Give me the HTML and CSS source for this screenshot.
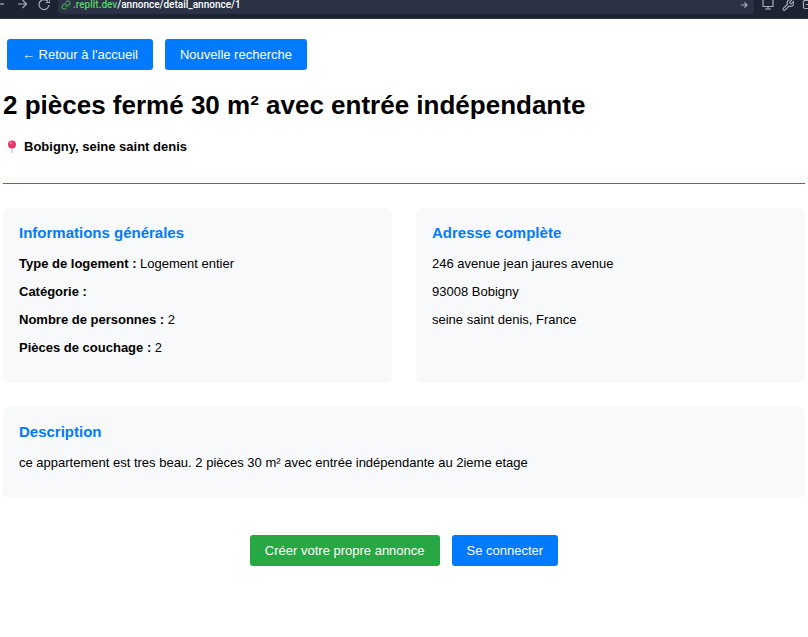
FILE: index.html
```html
<!DOCTYPE html>
<html lang="fr">
<head>
<meta charset="utf-8">
<title>Annonce</title>
<link rel="stylesheet" href="styles.css">
</head>
<body>
<header class="toolbar">
  <button class="tool" type="button" aria-label="Page précédente"><svg width="8" height="12" viewBox="0 0 8 12"><path d="M0 4h4"/></svg></button>
  <button class="tool" type="button" aria-label="Page suivante"><svg width="12" height="12" viewBox="0 0 12 12"><path d="M2 4h8.500M6.500 0l4 4-4 4"/></svg></button>
  <button class="tool" type="button" aria-label="Actualiser"><svg width="14" height="12" viewBox="0 0 14 12"><path d="M12 1.500A5 5 0 1 0 13 5M10 2.500H14V-1"/></svg></button>
  <div class="address">
    <svg class="link-icon" width="10" height="10" viewBox="0 0 24 24"><path d="M10 13a5 5 0 0 0 7.500.5l3-3a5 5 0 0 0-7-7l-1.700 1.700M14 11a5 5 0 0 0-7.500-.5l-3 3a5 5 0 0 0 7 7l1.700-1.700"/></svg>
    <span class="url"><span class="host">.replit.dev</span>/annonce/detail_annonce/1</span>
    <svg class="go" width="8" height="8" viewBox="0 0 8 8"><path d="M1 4h6M4.500 1.500L7 4 4.500 6.500"/></svg>
  </div>
  <button class="tool" type="button" aria-label="Écran"><svg width="12" height="12" viewBox="0 0 12 12"><path d="M1 -1v7.500h10V-1M6 6.500v2.500M3 9h6"/></svg></button>
  <button class="tool" type="button" aria-label="Outils"><svg width="12" height="12" viewBox="1 3 21 21"><path stroke-width="2" d="M14.700 6.300a1 1 0 0 0 0 1.400l1.600 1.600a1 1 0 0 0 1.400 0l3.770-3.770a6 6 0 0 1-7.940 7.940l-6.910 6.910a2.120 2.120 0 0 1-3-3l6.910-6.910a6 6 0 0 1 7.940-7.940z"/></svg></button>
  <button class="tool" type="button" aria-label="Ouvrir"><svg width="6" height="12" viewBox="0 0 6 12"><path d="M6 .5H3Q1.500 .5 1.500 2v5Q1.500 8.500 3 8.500h3M4 4.500h2"/></svg></button>
</header>
<main class="page">
  <nav class="nav">
    <a class="btn" href="#">← Retour à l'accueil</a>
    <a class="btn" href="#">Nouvelle recherche</a>
  </nav>
  <h1>2 pièces fermé 30 m² avec entrée indépendante</h1>
  <p class="place">
    <svg width="18" height="14" viewBox="0 0 18 14"><path d="M9 7v6" stroke="#b9bec4" stroke-width="1.200"/><circle cx="9" cy="4.500" r="4" fill="#e8386f"/><circle cx="8" cy="3" r="1.200" fill="#f9799f"/></svg>
    <strong>Bobigny, seine saint denis</strong>
  </p>
  <hr>
  <div class="columns">
    <section class="card">
      <h2>Informations générales</h2>
      <p><strong>Type de logement :</strong> Logement entier</p>
      <p><strong>Catégorie :</strong></p>
      <p><strong>Nombre de personnes :</strong> 2</p>
      <p><strong>Pièces de couchage :</strong> 2</p>
    </section>
    <section class="card">
      <h2>Adresse complète</h2>
      <p>246 avenue jean jaures avenue</p>
      <p>93008 Bobigny</p>
      <p>seine saint denis, France</p>
    </section>
  </div>
  <section class="card">
    <h2>Description</h2>
    <p>ce appartement est tres beau. 2 pièces 30 m² avec entrée indépendante au 2ieme etage</p>
  </section>
  <div class="actions">
    <a class="btn create" href="#">Créer votre propre annonce</a>
    <a class="btn" href="#">Se connecter</a>
  </div>
</main>
</body>
</html>
```
FILE: styles.css
```css
* {
  box-sizing: border-box;
}

body {
  margin: 0;
  background: #fff;
  color: #000;
  font: 13px/16px "Liberation Sans", Arial, sans-serif;
}

h1, h2, p {
  margin: 0;
}

.toolbar {
  display: flex;
  align-items: flex-start;
  gap: 8px;
  height: 19px;
  background: #1c2333;
  border-bottom: 1px solid #2b3245;
}

.tool {
  display: flex;
  flex: none;
  padding: 0;
  border: 0;
  background: none;
  color: #a8adb9;
}

.toolbar svg {
  flex: none;
  fill: none;
  stroke: currentColor;
  stroke-width: 1.2;
}

.toolbar .link-icon {
  margin-right: 2px;
  color: #4fa860;
  stroke-width: 2.5;
}

.address {
  display: flex;
  flex: 1;
  align-items: center;
  height: 14px;
  padding: 0 6px 4px 3px;
  border-radius: 0 0 4px 4px;
  background: #2b3245;
  color: #fff;
  font: 500 10px/12px Roboto, sans-serif;
}

.host {
  color: #5fcf74;
}

.go {
  margin-left: auto;
  color: #a8adb9;
}

.page {
  padding: 20px 3px;
}

.nav {
  display: flex;
  gap: 12px;
  padding: 0 4px;
}

.btn {
  padding: 8px 15px 7px;
  border-radius: 3px;
  background: #007bff;
  color: #fff;
  text-decoration: none;
}

.create {
  background: #28a745;
}

h1 {
  margin: 20px 0 19px;
  font-size: 26px;
  line-height: 30px;
}

.place {
  display: flex;
  align-items: center;
  gap: 3px;
}

hr {
  height: 1px;
  margin: 28px 0 24px;
  border: 0;
  background: #007bff;
}

.columns {
  display: grid;
  grid-template-columns: 1fr 1fr;
  gap: 24px;
  margin-bottom: 24px;
}

.card {
  padding: 16px 16px 27px;
  border-radius: 6px;
  background: #f8f9fa;
}

h2 {
  margin-bottom: 14px;
  color: #007bff;
  font-size: 15px;
  line-height: 18px;
}

.card p + p {
  margin-top: 12px;
}

.actions {
  display: flex;
  justify-content: center;
  gap: 12px;
  margin-top: 37px;
}
```
